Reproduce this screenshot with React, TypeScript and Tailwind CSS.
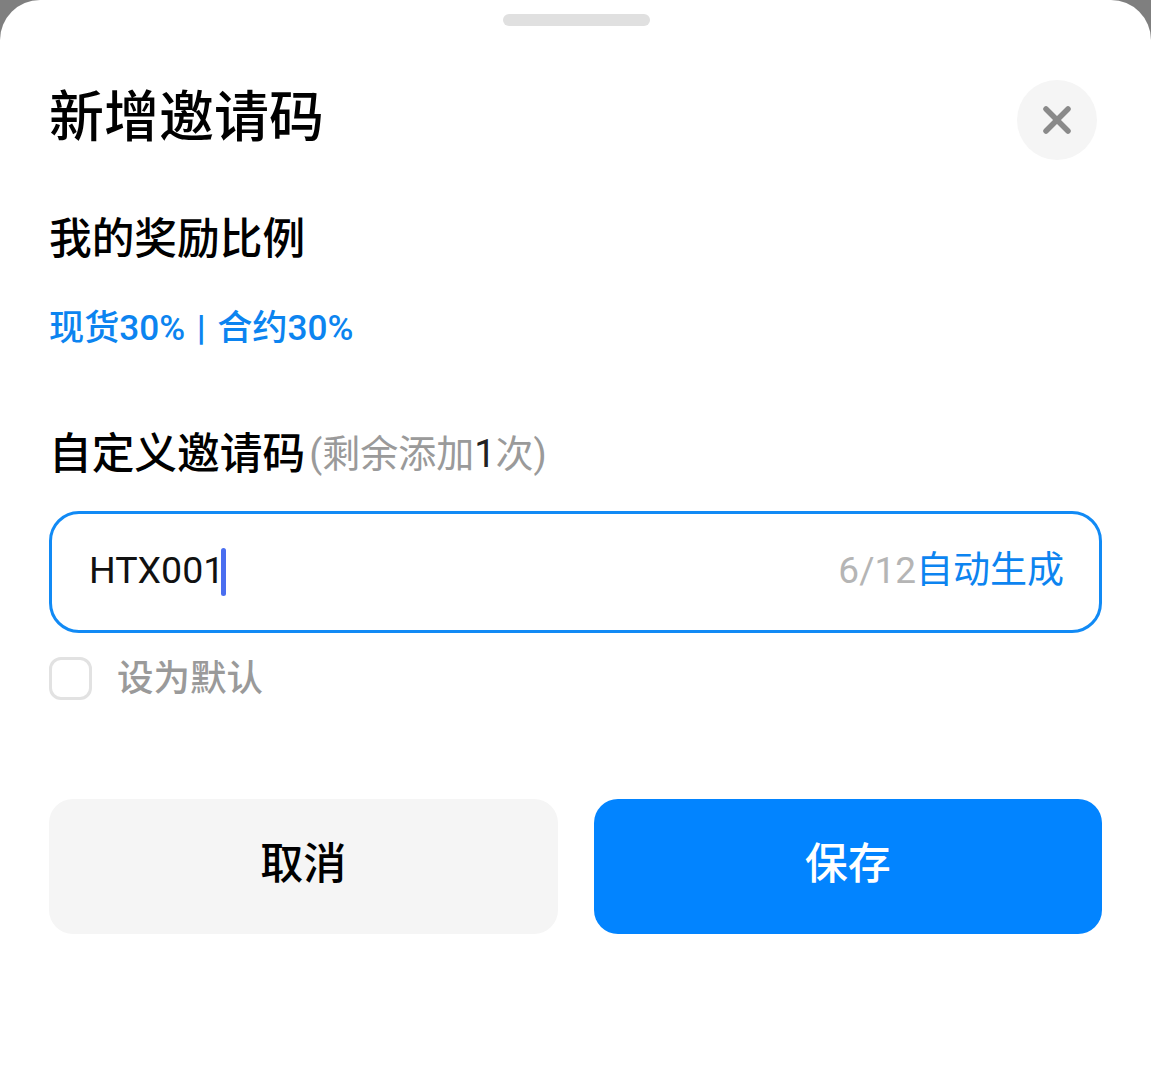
import { X } from "lucide-react";

const cjk = "font-['Roboto','Noto_Sans_CJK_SC',sans-serif]";

export default function App() {
  return (
    <div className={`h-[1080px] w-full overflow-hidden bg-[#7f7f7f] ${cjk}`}>
      <div className="h-full rounded-t-[40px] bg-white px-[49px]">
        {/* drag handle */}
        <div className="flex justify-center pt-[14px]">
          <div className="ml-[2px] h-3 w-[147px] rounded-full bg-[#e0e0e0]"></div>
        </div>

        <div className="mt-[54px] flex items-start justify-between pr-[5px]">
          <h1 className="mt-[1px] text-[55px] leading-[72px] font-medium text-black">新增邀请码</h1>
          <div className="flex h-20 w-20 items-center justify-center rounded-full bg-[#f5f5f5]">
            <X size={44} strokeWidth={3} className="text-[#8a8a8a]" />
          </div>
        </div>

        <h2 className="mt-[51px] text-[42.7px] leading-[56px] font-medium text-black">我的奖励比例</h2>
        <p className="mt-[38px] flex items-center text-[35.2px] leading-[46px] font-medium text-[#0c84f0]">
          <span>现货30%</span>
          <span className="mx-[11.5px] font-bold">|</span>
          <span>合约30%</span>
        </p>

        <div className="mt-[75px] flex items-center">
          <span className="text-[42.7px] leading-[56px] font-medium text-black">自定义邀请码</span>
          <span className="ml-[4px] text-[38px] leading-[56px] text-[#9a9a9a]">(剩余添加<span className="text-[#222222]">1</span>次)</span>
        </div>

        <div className="mt-[29px] flex h-[122px] items-center justify-between rounded-[30px] border-[3px] border-[#118af5] pr-[35px] pl-[37px]">
          <div className="flex items-center">
            <span className="mb-[4px] text-[37.5px] leading-[50px] text-[#111111]">HTX001</span>
            <span className="-ml-[3px] h-[48px] w-[5px] rounded-full bg-[#4a6ef0]"></span>
          </div>
          <div className="mb-[2px] flex items-center text-[37px] leading-[50px]">
            <span className="text-[#b5b5b5]">6/12</span>
            <span className="text-[#0c84f0]">自动生成</span>
          </div>
        </div>

        <div className="mt-[24px] flex items-center gap-[25px]">
          <div className="h-[43px] w-[43px] rounded-[12px] border-[3px] border-[#e2e2e2]"></div>
          <span className="text-[36.5px] leading-[42px] font-medium text-[#9a9a9a]">设为默认</span>
        </div>

        <div className="mt-[99px] flex gap-[36px]">
          <button className="h-[135px] flex-1 rounded-[24px] bg-[#f5f5f5] pb-[5px] text-[43px] font-medium text-black">取消</button>
          <button className="h-[135px] flex-1 rounded-[24px] bg-[#0284ff] pb-[5px] text-[43px] font-medium text-white">保存</button>
        </div>
      </div>
    </div>
  );
}
